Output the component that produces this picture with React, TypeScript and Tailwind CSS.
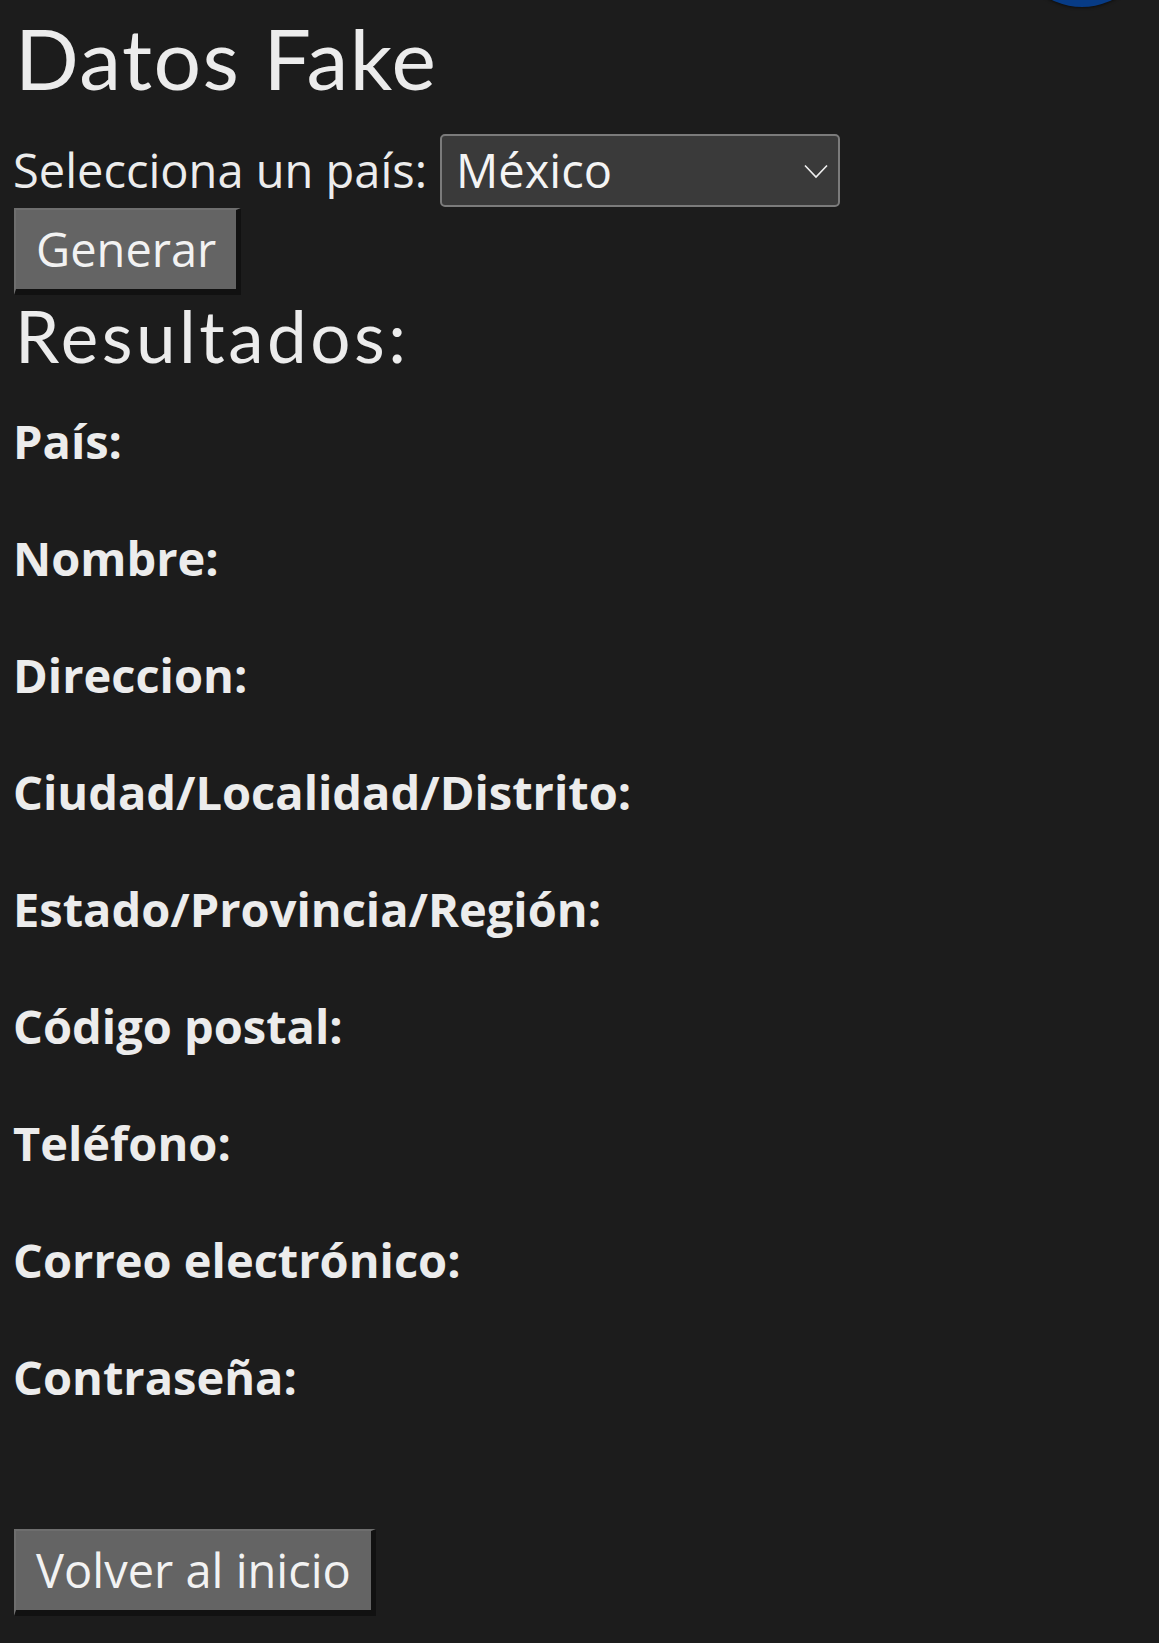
import React from "react";

const campos = [
  "País:",
  "Nombre:",
  "Direccion:",
  "Ciudad/Localidad/Distrito:",
  "Estado/Provincia/Región:",
  "Código postal:",
  "Teléfono:",
  "Correo electrónico:",
  "Contraseña:",
];

function BevelButton({ children }: { children: React.ReactNode }) {
  return (
    <button
      type="button"
      className="ml-[1px] block border-t-[2px] border-l-[2px] border-r-[5px] border-b-[6px] border-t-[#6e6e6e] border-l-[#6e6e6e] border-r-[#111111] border-b-[#111111] bg-[#646464] px-[20px] text-[47px] leading-[79px] text-[#f2f2f2] [font-family:'Open_Sans',sans-serif]"
    >
      {children}
    </button>
  );
}

export default function App() {
  return (
    <div className="relative min-h-[1643px] overflow-hidden bg-[#1c1c1c] px-[13px] text-[#ececec] [font-family:'Open_Sans',sans-serif]">
      {/* floating blue button, mostly off-screen */}
      <div className="absolute right-[9px] top-[-129px] h-[136px] w-[136px] rounded-full bg-[#073b85] shadow-[0_0_3px_1px_rgba(0,0,0,0.5)]" />

      <h1 className="pt-[16px] pl-[2px] text-[84px] leading-[84px] tracking-[1.5px] [font-family:Lato,sans-serif]">
        Datos Fake
      </h1>

      <div className="mt-[34px] flex items-center gap-[13px]">
        <label className="text-[47px] leading-[73px]">Selecciona un país:</label>
        <div className="relative flex h-[73px] w-[400px] items-center rounded-[5px] border-2 border-[#7b7b7b] bg-[#3a3a3a] pl-[14px]">
          <span className="text-[47px] leading-none text-[#f4f4f4]">México</span>
          <svg
            className="absolute right-[10px] top-[28px]"
            width="24"
            height="15"
            viewBox="0 0 24 15"
            fill="none"
          >
            <path d="M1 1.5 L12 13 L23 1.5" stroke="#f0f0f0" strokeWidth="1.6" />
          </svg>
        </div>
      </div>

      <div className="mt-[1px]">
        <BevelButton>Generar</BevelButton>
      </div>

      <h2 className="mt-[5px] pl-[2px] text-[71px] leading-[71px] tracking-[3.5px] [font-family:Lato,sans-serif]">
        Resultados:
      </h2>

      <div className="mt-[12px]">
        {campos.map((c) => (
          <p key={c} className="h-[117px] text-[47px] font-bold leading-[117px]">
            {c}
          </p>
        ))}
      </div>

      <div className="mt-[93px]">
        <BevelButton>Volver al inicio</BevelButton>
      </div>
    </div>
  );
}
